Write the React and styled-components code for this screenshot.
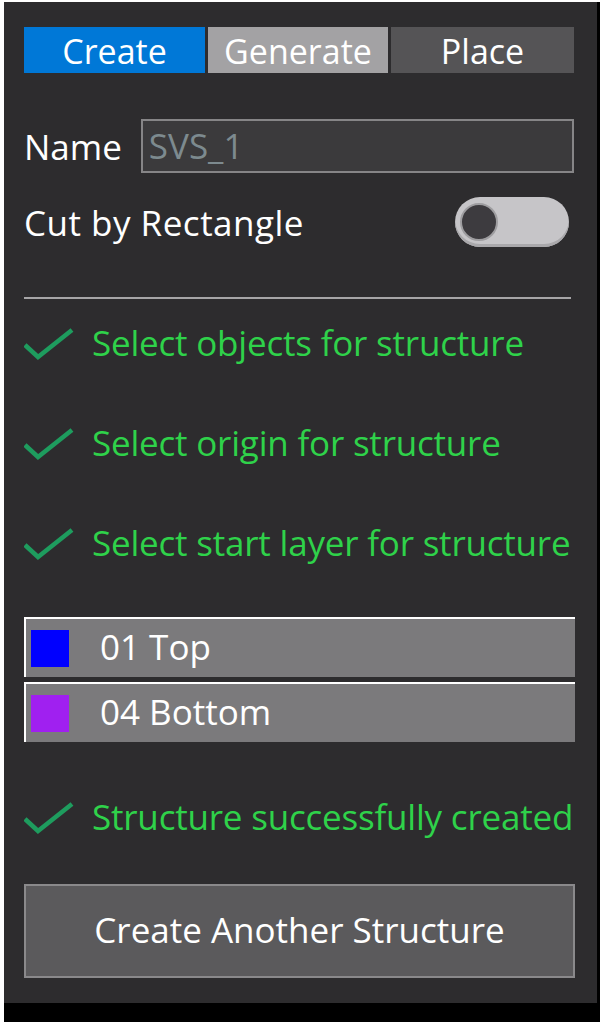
import React from "react";
import styled, { createGlobalStyle } from "styled-components";

const Global = createGlobalStyle`
  html, body { margin: 0; padding: 0; background: #ffffff; }
  * { box-sizing: border-box; }
`;

const FONT = `"Open Sans", "Noto Sans", sans-serif`;

const Frame = styled.div`
  margin: 2px 0 0 4px;
  width: 596px;
  background: #000000;
  padding: 0 3px 19px 0;
`;

const Panel = styled.div`
  width: 593px;
  height: 1001px;
  background: #2d2c2e;
  padding: 25px 23px 0 20px;
  font-family: ${FONT};
  color: #ffffff;
  display: flex;
  flex-direction: column;
`;

const Tabs = styled.div`
  display: grid;
  grid-template-columns: 181px 180px 183px;
  gap: 3px;
  height: 46px;
`;

const tabBg = { active: "#0078d7", mid: "#a3a2a4", dark: "#555456" };

const Tab = styled.div`
  background: ${(p) => tabBg[p.$tone]};
  display: flex;
  align-items: center;
  justify-content: center;
  font-size: 34px;
  line-height: 1;
  color: #ffffff;
  padding-top: 2px;
`;

const FieldRow = styled.div`
  margin-top: 46px;
  display: flex;
  align-items: center;
  gap: 19px;
  height: 54px;
`;

const Label = styled.span`
  font-size: 35px;
  line-height: 1;
  white-space: nowrap;
  letter-spacing: ${(p) => p.$spacing || 0}px;
`;

const Input = styled.div`
  flex: 1;
  height: 54px;
  border: 2px solid #868587;
  background: #3b3a3c;
  color: #7d8a8f;
  font-size: 35px;
  display: flex;
  align-items: center;
  padding-left: 6px;
  padding-bottom: 2px;
`;

const ToggleRow = styled.div`
  margin-top: 24px;
  height: 50px;
  display: flex;
  align-items: center;
  justify-content: space-between;
  padding-right: 5px;
`;

const Toggle = styled.div`
  width: 114px;
  height: 50px;
  border-radius: 25px;
  background: #c6c5c8;
  box-shadow: inset 0 -3px 0 #a9a8ab;
  display: flex;
  align-items: center;
  padding-left: 5px;
`;

const Knob = styled.div`
  width: 38px;
  height: 38px;
  border-radius: 50%;
  background: #3d3b3f;
  border: 2px solid #9e9da0;
`;

const Divider = styled.div`
  margin-top: 50px;
  height: 2px;
  width: 547px;
  background: #a6a5a7;
`;

const Steps = styled.div`
  margin-top: 15px;
  display: flex;
  flex-direction: column;
  gap: 40px;
`;

const Step = styled.div`
  height: 60px;
  display: flex;
  align-items: center;
  gap: 18px;
  margin-top: ${(p) => p.$offset || 0}px;
`;

const StepText = styled.span`
  color: #2fd24a;
  font-size: 35px;
  line-height: 1;
  white-space: nowrap;
  padding-bottom: 4px;
  letter-spacing: -0.2px;
`;

const CheckSvg = styled.svg`
  width: 50px;
  height: 32px;
  flex: none;
`;

const Check = () => (
  <CheckSvg viewBox="0 0 50 32">
    <path d="M1 17 L14 29 L48 2" fill="none" stroke="#1e9c5e" strokeWidth="4.5" />
  </CheckSvg>
);

const Layers = styled.div`
  margin-top: 43px;
  display: flex;
  flex-direction: column;
  gap: 5px;
`;

const Layer = styled.div`
  height: 60px;
  width: 551px;
  background: #7b7a7c;
  border-top: 2px solid #ffffff;
  border-left: 2px solid #ffffff;
  display: flex;
  align-items: center;
  padding-left: 5px;
  gap: 31px;
`;

const Swatch = styled.div`
  width: 38px;
  height: 37px;
  background: ${(p) => p.$color};
`;

const LayerName = styled.span`
  font-size: 35px;
  line-height: 1;
  padding-bottom: 4px;
`;

const Button = styled.div`
  margin-top: 36px;
  height: 94px;
  width: 551px;
  background: #5b5a5c;
  border: 2px solid #8a898b;
  display: flex;
  align-items: center;
  justify-content: center;
  font-size: 35px;
  padding-bottom: 4px;
`;

export default function App() {
  return (
    <>
      <Global />
      <Frame>
        <Panel>
          <Tabs>
            <Tab $tone="active">Create</Tab>
            <Tab $tone="mid">Generate</Tab>
            <Tab $tone="dark">Place</Tab>
          </Tabs>
          <FieldRow>
            <Label>Name</Label>
            <Input>SVS_1</Input>
          </FieldRow>
          <ToggleRow>
            <Label $spacing={0.5}>Cut by Rectangle</Label>
            <Toggle>
              <Knob />
            </Toggle>
          </ToggleRow>
          <Divider />
          <Steps>
            <Step>
              <Check />
              <StepText>Select objects for structure</StepText>
            </Step>
            <Step>
              <Check />
              <StepText>Select origin for structure</StepText>
            </Step>
            <Step>
              <Check />
              <StepText>Select start layer for structure</StepText>
            </Step>
          </Steps>
          <Layers>
            <Layer>
              <Swatch $color="#0000ff" />
              <LayerName>01 Top</LayerName>
            </Layer>
            <Layer>
              <Swatch $color="#a020f0" />
              <LayerName>04 Bottom</LayerName>
            </Layer>
          </Layers>
          <Step $offset={46}>
            <Check />
            <StepText>Structure successfully created</StepText>
          </Step>
          <Button>Create Another Structure</Button>
        </Panel>
      </Frame>
    </>
  );
}
